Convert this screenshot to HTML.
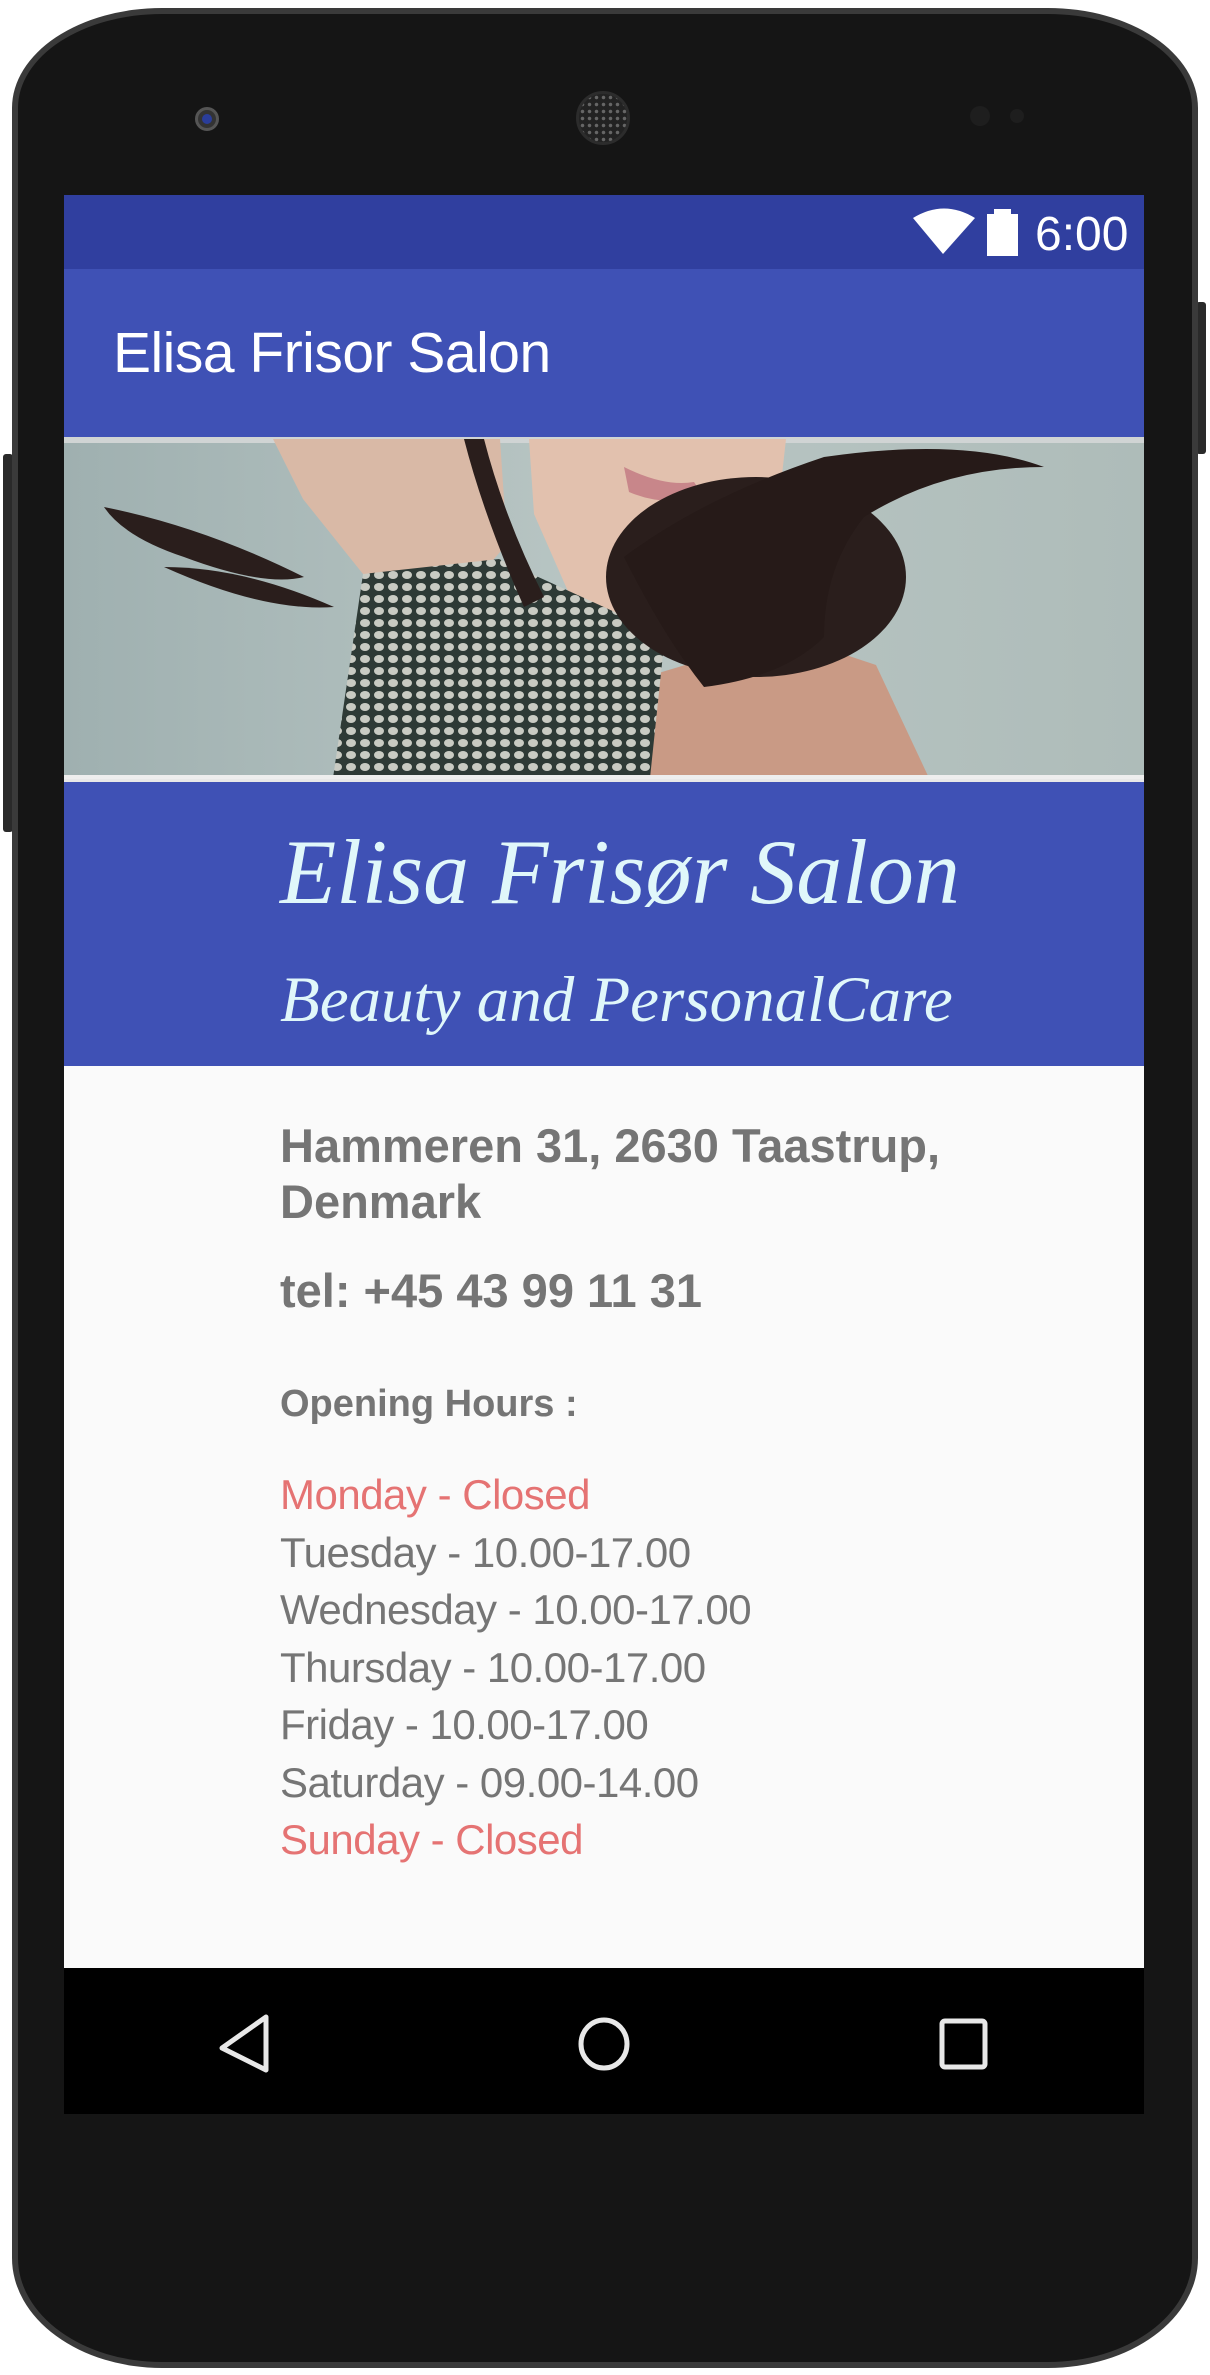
<!DOCTYPE html>
<html><head><meta charset="utf-8"><style>
*{margin:0;padding:0;box-sizing:border-box}
body{width:1210px;height:2375px;background:#fff;position:relative;overflow:hidden;font-family:"Liberation Sans",sans-serif}
.abs{position:absolute}
.body{left:12px;top:8px;width:1186px;height:2360px;background:#151515;border-radius:150px 150px 150px 150px/100px 100px 110px 110px;border:6px solid #3a3a3a}
.screen{left:64px;top:195px;width:1080px;height:1919px;background:#fafafa}
.status{left:64px;top:195px;width:1080px;height:74px;background:#303f9f}
.appbar{left:64px;top:269px;width:1080px;height:168px;background:#3f51b5}
.blue{left:64px;top:779px;width:1080px;height:287px;background:#3f51b5;border-top:3px solid #e8e8e8}
.nav{left:64px;top:1968px;width:1080px;height:146px;background:#000}
.t{color:#757575;left:280px;white-space:nowrap}
.b{font-weight:bold;font-size:47px}
.h{font-size:42px;letter-spacing:-0.5px}
.red{color:#e57373}
.script{font-family:"Liberation Serif",serif;font-style:italic;color:#e0f7fa;white-space:nowrap}
</style></head><body>
<div class="abs" style="left:1196px;top:302px;width:10px;height:152px;background:#2a2a2a;border-radius:3px"></div>
<div class="abs" style="left:3px;top:454px;width:10px;height:378px;background:#2a2a2a;border-radius:3px"></div>
<div class="abs body"></div>
<div class="abs" style="left:195px;top:107px;width:24px;height:24px;border-radius:50%;background:#333;border:3px solid #555"><div style="width:10px;height:10px;margin:4px;border-radius:50%;background:#2a3d9a"></div></div>
<div class="abs" style="left:576px;top:91px;width:54px;height:54px;border-radius:50%;background:radial-gradient(#666 1.5px,#222 2px) 0 0/7px 7px;border:3px solid #2c2c2c"></div>
<div class="abs" style="left:970px;top:106px;width:20px;height:20px;border-radius:50%;background:#1e1e1e"></div>
<div class="abs" style="left:1010px;top:109px;width:14px;height:14px;border-radius:50%;background:#1e1e1e"></div>
<div class="abs screen"></div>
<div class="abs status"></div>
<svg class="abs" style="left:912px;top:207px" width="64" height="48" viewBox="0 0 64 48"><path d="M1 11 Q32 -8 63 11 L31 47 Z" fill="#fff"/></svg>
<div class="abs" style="left:994px;top:209px;width:17px;height:6px;background:#fff"></div>
<div class="abs" style="left:987px;top:214px;width:31px;height:42px;background:#fff"></div>
<div class="abs" style="left:1035px;top:207px;font-size:48px;color:#fff;line-height:56px">6:00</div>
<div class="abs appbar"></div>
<div class="abs" style="left:113px;top:322px;font-size:57px;color:#fff;line-height:62px;letter-spacing:-0.5px">Elisa Frisor Salon</div>
<svg class="abs" style="left:64px;top:437px" width="1080" height="342" viewBox="0 0 1080 342">
<defs><linearGradient id="bg" x1="0" x2="1"><stop offset="0" stop-color="#9fb0b0"/><stop offset="0.5" stop-color="#b9c6c4"/><stop offset="1" stop-color="#aebcb9"/></linearGradient>
<pattern id="dots" width="14" height="12" patternUnits="userSpaceOnUse"><rect width="14" height="12" fill="#2e3a36"/><ellipse cx="7" cy="6" rx="5" ry="4" fill="#c9cbc3"/></pattern></defs>
<rect width="1080" height="342" fill="url(#bg)"/>
<rect width="1080" height="6" fill="#d0d4d4"/>
<path d="M209 2 L436 2 L443 107 L390 168 L299 137 L239 62 Z" fill="#d9b9a6"/>
<path d="M465 2 L722 2 L707 137 L646 198 L510 168 L470 77 Z" fill="#e2c1ae"/>
<path d="M560 30 Q600 50 630 45 L640 60 Q600 70 565 55 Z" fill="#c8868a"/>
<path d="M571 243 L722 198 L812 228 L865 341 L571 341 Z" fill="#c99a85"/>
<path d="M299 137 L435 122 L601 198 L586 341 L269 341 Z" fill="url(#dots)"/>
<ellipse cx="692" cy="140" rx="150" ry="100" fill="#2a1e1c"/>
<path d="M560 120 Q640 60 760 20 Q900 0 980 30 Q880 30 800 80 Q760 130 760 200 Q720 240 640 250 Q600 200 560 120 Z" fill="#261a18"/>
<path d="M40 70 Q140 90 240 140 Q200 150 120 120 Q60 100 40 70 Z" fill="#2a1e1c"/>
<path d="M100 130 Q180 130 270 170 Q200 175 100 130 Z" fill="#2a1e1c"/>
<path d="M420 2 Q440 80 480 160 L460 170 Q420 80 400 2 Z" fill="#2a1e1c"/>
<rect x="0" y="338" width="1080" height="4" fill="#eee"/>
</svg>
<div class="abs blue"></div>
<div class="abs script" style="left:280px;top:820px;font-size:92px;line-height:104px">Elisa Frisør Salon</div>
<div class="abs script" style="left:280px;top:962px;font-size:65px;line-height:76px">Beauty and PersonalCare</div>
<div class="abs t b" style="top:1118px;line-height:56px">Hammeren 31, 2630 Taastrup,<br>Denmark</div>
<div class="abs t b" style="top:1263px;line-height:56px">tel: +45 43 99 11 31</div>
<div class="abs t" style="top:1380px;font-size:38px;font-weight:bold;line-height:48px">Opening Hours :</div>
<div class="abs t h" style="top:1466px;line-height:57.5px"><span class="red">Monday - Closed</span><br>Tuesday - 10.00-17.00<br>Wednesday - 10.00-17.00<br>Thursday - 10.00-17.00<br>Friday - 10.00-17.00<br>Saturday - 09.00-14.00<br><span class="red">Sunday - Closed</span></div>
<div class="abs nav"></div>
<svg class="abs" style="left:64px;top:1968px" width="1080" height="146">
<path d="M202 49 L158 80 L202 102 Z" fill="none" stroke="#e8e8e8" stroke-width="5" stroke-linejoin="round"/>
<ellipse cx="540" cy="76" rx="23" ry="24" fill="none" stroke="#e8e8e8" stroke-width="5"/>
<rect x="878" y="53" width="43" height="46" rx="3" fill="none" stroke="#e8e8e8" stroke-width="5"/>
</svg>
</body></html>
